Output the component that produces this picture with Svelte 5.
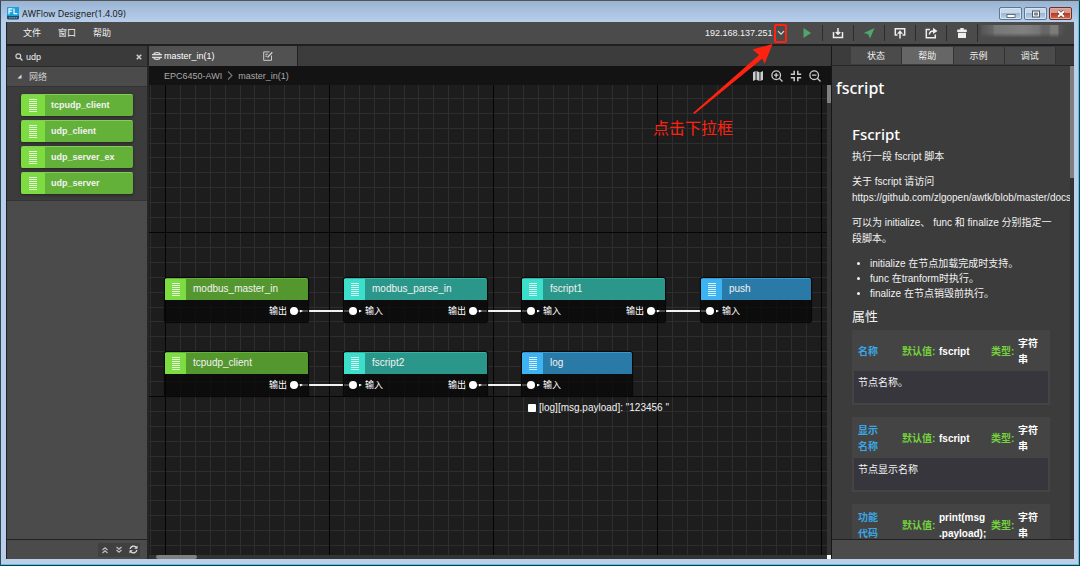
<script>
  const cell = 164;
  const steps = Array.from({ length: 10 }, (_, i) => Math.round(((i + 1) * cell) / 11));

  const menus = ['文件', '窗口', '帮助'];
  const palette = ['tcpudp_client', 'udp_client', 'udp_server_ex', 'udp_server'];
  const helpTabs = ['状态', '帮助', '示例', '调试'];

  const nodes = [
    { name: 'modbus_master_in', kind: 'green', x: 15, y: 192, w: 145, output: true },
    { name: 'modbus_parse_in', kind: 'teal', x: 194, y: 192, w: 145, input: true, output: true },
    { name: 'fscript1', kind: 'teal', x: 372, y: 192, w: 145, input: true, output: true },
    { name: 'push', kind: 'blue', x: 551, y: 192, w: 112, input: true },
    { name: 'tcpudp_client', kind: 'green', x: 15, y: 266, w: 145, output: true },
    { name: 'fscript2', kind: 'teal', x: 194, y: 266, w: 145, input: true, output: true },
    { name: 'log', kind: 'blue', x: 372, y: 266, w: 112, input: true, message: '[log][msg.payload]: "123456 "' }
  ];

  const links = [[0, 1], [1, 2], [2, 3], [4, 5], [5, 6]];

  const props = [
    { name: '名称', value: 'fscript', type: '字符串', text: '节点名称。' },
    { name: '显示名称', value: 'fscript', type: '字符串', text: '节点显示名称' },
    { name: '功能代码', value: 'print(msg.payload);', type: '字符串', text: '' }
  ];

  let keyword = $state('udp');
  let device = $state('192.168.137.251');
  let activeTab = $state('帮助');
</script>

{#snippet bars()}
  <svg width="8" height="13" viewBox="0 0 8 13" shape-rendering="crispEdges" aria-hidden="true">
    <path d="M0 .5h8M0 2.500h8M0 4.500h8M0 6.500h8M0 8.500h8M0 10.500h8M0 12.500h8" stroke="#fff" stroke-opacity=".8" />
  </svg>
{/snippet}

<div class="window">
  <header class="title-bar">
    <svg width="12" height="13" viewBox="0 0 12 13" aria-hidden="true">
      <rect width="12" height="12.5" rx="1.5" fill="#1d4d6e" />
      <rect width="12" height="9" rx="1.5" fill="#17a4dc" />
      <path d="M2 7.2V1.8h3.4M2 4.3h2.8M7 1.5v5.2h3.4" fill="none" stroke="#fff" stroke-width="1.2" />
      <path d="M2 10.8h8" stroke="#9ab" stroke-width="1" stroke-dasharray="1.5 .7" />
    </svg>
    <h1>AWFlow Designer(1.4.09)</h1>
    <div class="window-buttons">
      <button type="button" aria-label="最小化">
        <svg width="10" height="8" viewBox="0 0 10 8"><rect x="1" y="4.5" width="8" height="3" fill="#fff" stroke="#4a5564" stroke-width=".8" /></svg>
      </button>
      <button type="button" aria-label="最大化">
        <svg width="10" height="8" viewBox="0 0 10 8"><rect x="1.5" y="1" width="7" height="6" fill="#fff" stroke="#4a5564" /><rect x="3.7" y="3" width="2.6" height="2" fill="#9fb6d0" stroke="#4a5564" stroke-width=".8" /></svg>
      </button>
      <button type="button" class="close" aria-label="关闭">
        <svg width="10" height="8" viewBox="0 0 10 8"><path d="M2 1.2l6 5.6M8 1.2L2 6.8" stroke="#5a3a3a" stroke-width="3" /><path d="M2 1.2l6 5.6M8 1.2L2 6.8" stroke="#fff" stroke-width="1.9" /></svg>
      </button>
    </div>
  </header>

  <div class="app">
    <div class="menu-bar">
      <nav>
        {#each menus as menu}
          <button type="button">{menu}</button>
        {/each}
      </nav>

      <div class="device">
        <select aria-label="设备地址" bind:value={device}>
          <option>192.168.137.251</option>
        </select>
        <svg class="chevron" width="8" height="6" viewBox="0 0 8 6" aria-hidden="true"><path d="M1 1.2l3 3 3-3" fill="none" stroke="#ddd" stroke-width="1.2" /></svg>
        <div class="hint">
          <svg width="136" height="92" viewBox="0 0 136 92" aria-hidden="true">
            <rect x="122" y="1" width="11" height="17" rx="1" fill="none" stroke="#ff2211" stroke-width="2" />
            <path d="M40 89L106 31L99.500 25.500L119.500 20L111.500 40L109.500 34.500L41.500 90Z" fill="#ff2211" />
          </svg>
          <span>点击下拉框</span>
        </div>
      </div>

      <div class="tools">
        <button type="button" aria-label="运行"><svg width="12" height="12" viewBox="0 0 12 12"><path d="M2.500 1L10 6L2.500 11Z" fill="#4fa86a" /></svg></button>
        <button type="button" aria-label="下载"><svg width="12" height="12" viewBox="0 0 12 12"><path d="M1.500 5v5.500h9V5M6 1v6M3.700 5L6 7.300L8.300 5" fill="none" stroke="#eee" stroke-width="1.500" /></svg></button>
        <button type="button" aria-label="部署"><svg width="12" height="12" viewBox="0 0 12 12"><path d="M11.500 1L.8 6l4.400 1.300L7 11.500Z" fill="#4fa86a" /></svg></button>
        <button type="button" aria-label="上传"><svg width="12" height="12" viewBox="0 0 12 12"><path d="M3.500 8H1.300V1.700h9.400V8H8.500M6 11.500V5" fill="none" stroke="#eee" stroke-width="1.500" /><path d="M6 3.200L9 6.800H3Z" fill="#eee" /></svg></button>
        <button type="button" aria-label="导出"><svg width="13" height="12" viewBox="0 0 13 12"><path d="M5 2.500H1.300v8.200h9V7.500M4.300 7.500C4.500 5 6 3.900 8.500 3.900" fill="none" stroke="#eee" stroke-width="1.500" /><path d="M8 .7l4.500 3.200L8 7.100Z" fill="#eee" /></svg></button>
        <button type="button" aria-label="清除"><svg width="12" height="12" viewBox="0 0 12 12"><path d="M4.300 1h3.400v1.500H10a.8.8 0 0 1 .8.8V5H1.200V3.300a.8.8 0 0 1 .8-.8h2.300ZM2 5.800h8V11H2Z" fill="#eee" /></svg></button>
        <div class="user"><i></i></div>
      </div>
    </div>

    <div class="body">
      <aside class="palette">
        <div class="search">
          <svg width="8" height="8" viewBox="0 0 8 8" aria-hidden="true"><circle cx="3.300" cy="3.300" r="2.400" fill="none" stroke="#ccc" stroke-width="1.200" /><path d="M5 5l2.500 2.500" stroke="#ccc" stroke-width="1.500" /></svg>
          <input type="text" aria-label="搜索节点" bind:value={keyword} />
          <button type="button" aria-label="清空" onclick={() => (keyword = '')}>
            <svg width="6" height="6" viewBox="0 0 6 6"><path d="M.8.8l4.400 4.400M5.200.8L.8 5.200" stroke="#ccc" stroke-width="1.600" /></svg>
          </button>
        </div>
        <button type="button" class="category">
          <svg width="5" height="5" viewBox="0 0 5 5" aria-hidden="true"><path d="M4.500.5v4h-4Z" fill="#ddd" /></svg>
          网络
        </button>
        <ul class="items">
          {#each palette as item}
            <li><span class="icon">{@render bars()}</span><span class="label">{item}</span></li>
          {/each}
        </ul>
        <footer>
          <div class="fold">
            <button type="button" aria-label="全部折叠"><svg width="8" height="8" viewBox="0 0 8 8"><path d="M1.500 4L4 1.800L6.500 4M1.500 7L4 4.800L6.500 7" fill="none" stroke="#bbb" stroke-width="1.300" /></svg></button>
            <button type="button" aria-label="全部展开"><svg width="8" height="8" viewBox="0 0 8 8"><path d="M1.500 1L4 3.200L6.500 1M1.500 4L4 6.200L6.500 4" fill="none" stroke="#bbb" stroke-width="1.300" /></svg></button>
            <button type="button" aria-label="刷新"><svg width="9" height="9" viewBox="0 0 9 9"><path d="M1.200 4A3.300 3.300 0 0 1 7 2.300M7.800 5A3.300 3.300 0 0 1 2 6.700" fill="none" stroke="#ddd" stroke-width="1.400" /><path d="M8.500.5v3.300H5.200ZM.5 8.500V5.200h3.300Z" fill="#ddd" /></svg></button>
          </div>
        </footer>
      </aside>

      <main class="editor">
        <div class="tabs">
          <div class="tab">
            <svg width="10" height="10" viewBox="0 0 10 10" aria-hidden="true"><path d="M2 3.200C2 1 8 1 8 3.200M0 3.700h10M0 6.300h10M2 6.800C2 9 8 9 8 6.800" fill="none" stroke="#ddd" stroke-width="1.200" /></svg>
            <span>master_in(1)</span>
            <button type="button" aria-label="编辑流程"><svg width="10" height="10" viewBox="0 0 10 10"><path d="M8.500 4.500v4.800H.7V.9h5.800M2.300 3.200H5M2.300 5.200H4" fill="none" stroke="#ccc" /><path d="M4.500 6.500L9.300 1.200" stroke="#ccc" stroke-width="1.300" /></svg></button>
          </div>
        </div>
        <div class="crumbs">
          <a href="#project">EPC6450-AWI</a>
          <svg width="6" height="9" viewBox="0 0 6 9" aria-hidden="true"><path d="M1 .5l4 4-4 4" fill="none" stroke="#777" stroke-width="1.100" /></svg>
          <span>master_in(1)</span>
          <div class="zoom">
            <button type="button" aria-label="导航图"><svg width="12" height="12" viewBox="0 0 12 12"><path d="M1 2.200L3.600 1v8.800L1 11ZM4.500 1l3 1.200V11l-3-1.200ZM8.400 2.200L11 1v8.800L8.400 11Z" fill="#ccc" /></svg></button>
            <button type="button" aria-label="放大"><svg width="12" height="12" viewBox="0 0 12 12"><circle cx="5.200" cy="5.200" r="4.300" fill="none" stroke="#ccc" stroke-width="1.300" /><path d="M8.300 8.300L11.500 11.500M3 5.200h4.400M5.200 3v4.400" stroke="#ccc" stroke-width="1.300" /></svg></button>
            <button type="button" aria-label="适应"><svg width="12" height="12" viewBox="0 0 12 12"><path d="M.8 4.200h3.400V.8M7.800.8v3.400h3.400M.8 7.800h3.400v3.400M11.200 7.800H7.800v3.400" fill="none" stroke="#ccc" stroke-width="1.500" /></svg></button>
            <button type="button" aria-label="缩小"><svg width="12" height="12" viewBox="0 0 12 12"><circle cx="5.200" cy="5.200" r="4.300" fill="none" stroke="#ccc" stroke-width="1.300" /><path d="M8.300 8.300L11.500 11.500M3 5.200h4.400" stroke="#ccc" stroke-width="1.300" /></svg></button>
          </div>
        </div>

        <div class="viewport">
          <div class="canvas">
            <svg class="grid" width="100%" height="100%" aria-hidden="true">
              <defs>
                <pattern id="grid" x="16" y="-17" width={cell} height={cell} patternUnits="userSpaceOnUse">
                  {#each steps as s}
                    <rect x={s} y="0" width="1" height={cell} fill="#2e2e2e" />
                    <rect x="0" y={s} width={cell} height="1" fill="#2e2e2e" />
                  {/each}
                  <rect width="1" height={cell} fill="#050505" />
                  <rect width={cell} height="1" fill="#050505" />
                </pattern>
              </defs>
              <rect width="100%" height="100%" fill="url(#grid)" />
              {#each links as [a, b]}
                <line x1={nodes[a].x + 130} y1={nodes[a].y + 34} x2={nodes[b].x + 10} y2={nodes[b].y + 34} stroke="#f2f2f2" stroke-width="2" />
              {/each}
            </svg>
            {#each nodes as node}
              <div class="node {node.kind}" style="left: {node.x}px; top: {node.y}px; width: {node.w}px">
                <div class="node-head"><span class="icon">{@render bars()}</span><span class="label">{node.name}</span></div>
                <div class="ports">
                  {#if node.input}
                    <span class="port"><i></i><b></b>输入</span>
                  {/if}
                  {#if node.output}
                    <span class="port out">输出<i></i><b></b></span>
                  {/if}
                </div>
                {#if node.message}
                  <p class="message"><i></i>{node.message}</p>
                {/if}
              </div>
            {/each}
          </div>
          <div class="scroll-y"><i></i></div>
        </div>
        <div class="scroll-x"><i></i><b></b></div>
      </main>

      <aside class="help">
        <div class="help-tabs">
          {#each helpTabs as tab}
            <button type="button" class:active={activeTab === tab} onclick={() => (activeTab = tab)}>{tab}</button>
          {/each}
        </div>
        <div class="help-view">
          <div class="help-text">
            <h2>fscript</h2>
            <article>
              <h3>Fscript</h3>
              <p>执行一段 fscript 脚本</p>
              <p>关于 fscript 请访问 <span class="url">https://github.com/zlgopen/awtk/blob/master/docs/f</span></p>
              <p>可以为 initialize、 func 和 finalize 分别指定一段脚本。</p>
              <ul>
                <li>initialize 在节点加载完成时支持。</li>
                <li>func 在tranform时执行。</li>
                <li>finalize 在节点销毁前执行。</li>
              </ul>
              <h4>属性</h4>
              {#each props as prop}
                <section class="prop">
                  <div class="prop-head">
                    <span class="name">{prop.name}</span>
                    <span class="key">默认值:</span>
                    <span class="value">{prop.value}</span>
                    <span class="key">类型:</span>
                    <span class="type">{prop.type}</span>
                  </div>
                  <div class="prop-text">{prop.text}</div>
                </section>
              {/each}
            </article>
          </div>
          <div class="scroll-y"><i></i></div>
        </div>
        <footer></footer>
      </aside>
    </div>
  </div>
</div>

<style>
  :global(body) {
    background: #b9cfea;
  }

  * {
    box-sizing: border-box;
  }

  .window {
    display: flex;
    flex-direction: column;
    height: 100vh;
    padding: 0 6px 7px;
    border-top: 1px solid #555;
    background: linear-gradient(#98b4d3, #b9d0ec 22px, #b9cfea);
    box-shadow: inset 1px 0 #33485a, inset -1px -1px #163a44, inset -2px -2px #52c6e4;
    font-family: "Liberation Sans", "Noto Sans CJK SC", sans-serif;
    font-size: 9px;
    line-height: 12px;
    color: #f2f2f2;
    overflow: hidden;
  }

  h1, h2, h3, h4, p, ul {
    margin: 0;
    padding: 0;
    font-weight: normal;
  }

  ul {
    list-style: none;
  }

  button, input, select {
    margin: 0;
    padding: 0;
    border: 0;
    background: none;
    font: inherit;
    color: inherit;
  }

  svg {
    display: block;
    flex: none;
  }

  .title-bar {
    display: flex;
    align-items: center;
    flex: none;
    gap: 3px;
    height: 21px;
    padding: 4px 2px 0 1px;
  }

  h1 {
    font-family: "Open Sans", sans-serif;
    font-size: 9px;
    color: #111;
  }

  .window-buttons {
    display: flex;
    gap: 2px;
    margin-left: auto;
  }

  .window-buttons button {
    display: grid;
    place-items: center;
    width: 23px;
    height: 13px;
    border: 1px solid #5f7690;
    border-radius: 2px;
    background: linear-gradient(#c6d8ec 45%, #9db6d2 50%, #bcd3ec);
    box-shadow: inset 0 0 0 1px #d5e3f2;
  }

  .window-buttons .close {
    border-color: #6b2e2e;
    background: linear-gradient(#d99a8c 45%, #b83a24 50%, #cf6a4c);
    box-shadow: inset 0 0 0 1px #e3a99c;
  }

  .app {
    display: flex;
    flex-direction: column;
    flex: 1;
    min-height: 0;
    border-left: 1px solid #222;
    background: #4b4b4b;
  }

  .menu-bar {
    display: flex;
    align-items: center;
    flex: none;
    height: 24px;
    border-bottom: 2px solid #1f1f1f;
    background: #4b4b4b;
  }

  nav {
    display: flex;
    gap: 17px;
    padding-left: 16px;
  }

  .device {
    position: relative;
    display: flex;
    align-items: center;
    margin-left: auto;
    margin-right: 5px;
    padding-right: 2px;
  }

  .device select {
    appearance: none;
    width: 72px;
  }

  .hint {
    position: absolute;
    right: -2px;
    top: -3px;
    z-index: 5;
    width: 136px;
    font-size: 16px;
    line-height: 26px;
    color: #ff2211;
    pointer-events: none;
  }

  .tools {
    display: flex;
    align-items: center;
  }

  .tools button {
    display: grid;
    place-items: center;
    width: 30px;
    height: 16px;
  }

  .tools button + button,
  .user {
    width: 31px;
    border-left: 1px solid #2c2c2c;
  }

  .user {
    width: 97px;
    height: 18px;
    padding: 1px 8px 1px 3px;
  }

  .user i {
    display: block;
    height: 16px;
    background: linear-gradient(90deg, #555, #666 14%, #777 16%, #808080 50%, #767676 68%, #666 72%, #666 80%, #7c7c76 82%, #7c7c76 90%, #555 92%, #4b4b4b);
    mask-image: linear-gradient(#000 50%, transparent 80%);
  }

  .body {
    display: flex;
    flex: 1;
    min-height: 0;
  }

  .palette {
    display: flex;
    flex-direction: column;
    flex: none;
    width: 142px;
    border-right: 2px solid #262626;
  }

  .search {
    display: flex;
    align-items: center;
    gap: 3px;
    height: 20px;
    padding: 2px 5px 0 8px;
    background: #3a3a3a;
  }

  .search input {
    flex: 1;
    min-width: 0;
    outline: none;
  }

  .category {
    display: flex;
    align-items: center;
    gap: 7px;
    height: 21px;
    padding: 0 10px;
    border-top: 1px solid #2a2a2a;
    border-bottom: 1px solid #333;
    background: #4b4b4b;
    color: #ccc;
  }

  .items {
    display: flex;
    flex-direction: column;
    gap: 4px;
    padding: 7px 14px 6px;
    border-bottom: 1px solid #333;
    background: #3c3c3c;
  }

  .items li {
    display: flex;
    height: 22px;
    border-radius: 2px;
    background: #64b13a;
    border-top: 1px solid #85cc5a;
    box-shadow: 0 1px 3px #222;
    font-weight: bold;
    line-height: 20px;
  }

  .icon {
    display: grid;
    place-items: center;
    flex: none;
    width: 24px;
    border-radius: 2px 0 0 2px;
    background: #7edc43;
  }

  .items .label {
    padding-left: 6px;
  }

  footer {
    display: flex;
    align-items: center;
    justify-content: flex-end;
    flex: none;
    height: 20px;
    margin-top: auto;
    border-top: 1px solid #222;
    background: #4b4b4b;
  }

  .fold {
    display: flex;
    margin-right: 7px;
    background: #404040;
  }

  .fold button {
    display: grid;
    place-items: center;
    width: 14px;
    height: 14px;
  }

  .editor {
    display: flex;
    flex-direction: column;
    flex: 1;
    min-width: 0;
    background: #1d1d1d;
  }

  .tabs {
    flex: none;
    height: 20px;
    background: #3c3c3c;
  }

  .tab {
    display: flex;
    align-items: center;
    gap: 2px;
    width: 149px;
    height: 20px;
    padding: 0 24px 0 3px;
    border-right: 1px solid #222;
    background: #515151;
    color: #fff;
  }

  .tab button {
    margin-left: auto;
  }

  .crumbs {
    display: flex;
    align-items: center;
    gap: 5px;
    flex: none;
    height: 19px;
    padding: 0 10px 0 15px;
    background: #131313;
    color: #aaa;
  }

  .crumbs a {
    color: inherit;
    text-decoration: none;
  }

  .zoom {
    display: flex;
    gap: 7px;
    margin-left: auto;
  }

  .viewport {
    display: flex;
    flex: 1;
    min-height: 0;
  }

  .canvas {
    position: relative;
    flex: 1;
    overflow: hidden;
  }

  .node {
    position: absolute;
    height: 46px;
    border: 1px solid #080808;
    border-radius: 3px;
    background: rgba(5, 5, 5, .72);
    box-shadow: 0 0 1px #000;
  }

  .node-head {
    display: flex;
    height: 22px;
    border-top: 1px solid #64b13a;
    border-radius: 2px 2px 0 0;
    background: #54972f;
    font-size: 10px;
    line-height: 20px;
  }

  .node .icon {
    width: 21px;
    border-radius: 0;
  }

  .node .label {
    padding-left: 7px;
  }

  .teal .node-head {
    border-color: #33b5a5;
    background: #2a978a;
  }

  .teal .icon {
    background: #3cdfcb;
  }

  .blue .node-head {
    border-color: #3a98cf;
    background: #2a7aa8;
  }

  .blue .icon {
    background: #3eb3f3;
  }

  .ports {
    display: flex;
    height: 22px;
    padding: 0 5px 0 5px;
  }

  .port {
    display: flex;
    align-items: center;
    color: #fff;
  }

  .port i {
    width: 8px;
    height: 8px;
    border-radius: 4px;
    background: #fff;
  }

  .port b {
    width: 3px;
    height: 3px;
    margin: 0 3px 0 2px;
    clip-path: polygon(0 0, 100% 50%, 0 100%);
    background: #fff;
  }

  .port.out {
    margin-left: auto;
  }

  .port.out i {
    margin-left: 3px;
  }

  .port.out b {
    margin-right: 0;
  }

  .message {
    position: absolute;
    left: 6px;
    top: 50px;
    display: flex;
    align-items: center;
    gap: 3px;
    font-size: 10px;
    white-space: pre;
  }

  .message i {
    width: 8px;
    height: 8px;
    border-radius: 1px;
    background: #fff;
  }

  .scroll-y {
    flex: none;
    width: 4px;
    background: #333;
  }

  .scroll-y i {
    display: block;
    height: 18px;
    background: #808080;
  }

  .scroll-x {
    display: flex;
    justify-content: space-between;
    flex: none;
    height: 4px;
    padding-left: 7px;
    background: #333;
  }

  .scroll-x i {
    width: 41px;
    border-radius: 2px;
    background: #808080;
  }

  .scroll-x b {
    width: 4px;
    background: #fff;
  }

  .help {
    display: flex;
    flex-direction: column;
    flex: none;
    width: 243px;
    border-left: 1px solid #161616;
    background: #3c3c3c;
  }

  .help-tabs {
    display: flex;
    flex: none;
    height: 20px;
    padding: 1px 18px 1px 19px;
    border-bottom: 1px solid #262626;
  }

  .help-tabs button {
    flex: 1;
    border-right: 1px solid #333;
    background: #4b4b4b;
  }

  .help-tabs .active {
    background: #666;
  }

  .help-view {
    display: flex;
    flex: 1;
    min-height: 0;
  }

  .help-view .scroll-y i {
    height: 112px;
  }

  .help-text {
    flex: 1;
    min-width: 0;
    padding: 11px 0 0 4px;
    overflow: hidden;
    font-size: 10px;
    line-height: 16px;
  }

  h2, h3 {
    font-family: "Noto Sans", "Open Sans", sans-serif;
    font-weight: 500;
    line-height: 22px;
    color: #fff;
  }

  h2 {
    font-size: 16px;
  }

  h3 {
    font-size: 15px;
  }

  article {
    padding: 24px 16px 0 16px;
  }

  article p {
    margin-bottom: 9px;
  }

  h3 {
    margin-bottom: 4px;
  }

  .url {
    white-space: nowrap;
  }

  article ul {
    padding-left: 18px;
    list-style: disc;
    line-height: 15px;
  }

  h4 {
    margin: 8px 0 5px;
    font-size: 13px;
  }

  .prop {
    margin: 0 4px 12px 0;
    border: 2px solid #444;
    border-top: 0;
  }

  .prop-head {
    display: grid;
    grid-template-columns: 40px 33px 48px 23px 24px;
    align-items: center;
    justify-content: start;
    column-gap: 4px;
    min-height: 41px;
    padding: 6px 4px 3px;
    background: #444;
    font-weight: bold;
    color: #fff;
  }

  .name {
    max-width: 22px;
    color: #3aa7e4;
  }

  .key {
    color: #74d33c;
    white-space: nowrap;
  }

  .value {
    overflow-wrap: anywhere;
  }

  .prop-text {
    min-height: 32px;
    padding: 4px;
    background: #37363d;
  }
</style>
